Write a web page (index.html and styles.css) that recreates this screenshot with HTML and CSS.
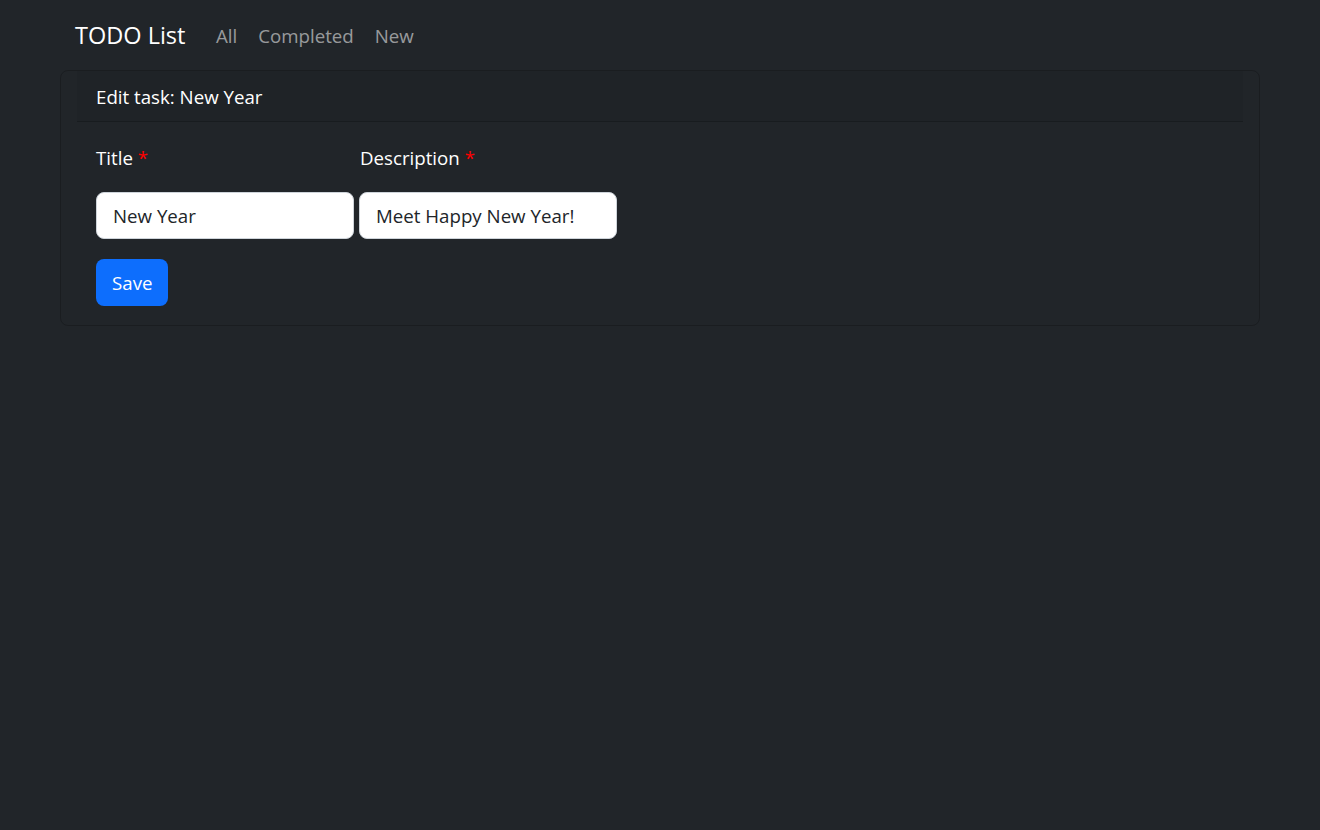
FILE: index.html
```html
<!DOCTYPE html>
<html lang="en">
<head>
<meta charset="utf-8">
<title>TODO List</title>
<link rel="stylesheet" href="styles.css">
</head>
<body>
<nav class="navbar">
  <a class="brand" href="#">TODO List</a>
  <ul class="nav-links">
    <li><a href="#">All</a></li>
    <li><a href="#">Completed</a></li>
    <li><a href="#">New</a></li>
  </ul>
</nav>
<main class="card">
  <div class="card-header">Edit task: New Year</div>
  <form class="card-body">
    <div class="fields">
      <label class="label">Title <span class="req">*</span></label>
      <label class="label label-desc">Description <span class="req">*</span></label>
      <input class="input" type="text" value="New Year">
      <input class="input" type="text" value="Meet Happy New Year!">
    </div>
    <button class="btn" type="button">Save</button>
  </form>
</main>
</body>
</html>
```

FILE: styles.css
```css
* { box-sizing: border-box; }
html, body { margin: 0; padding: 0; }
body {
  background: #212529;
  color: #dee2e6;
  font-family: "Open Sans", "Noto Sans", sans-serif;
  font-size: 18.7px;
  width: 1320px;
  height: 830px;
}
.navbar {
  height: 70px;
  display: flex;
  align-items: center;
  padding: 0 75px;
}
.brand {
  color: #fff;
  text-decoration: none;
  font-size: 23.5px;
  margin-right: 20px;
}
.nav-links {
  list-style: none;
  display: flex;
  margin: 0;
  padding: 0;
}
.nav-links a {
  display: block;
  padding: 0 10.5px;
  color: rgba(255, 255, 255, 0.55);
  text-decoration: none;
  font-size: 18.7px;
}
.card {
  margin: 0 60px;
  width: 1200px;
  border: 1px solid rgba(0, 0, 0, 0.2);
  border-radius: 8px;
  padding: 0 16px;
}
.card-header {
  height: 51px;
  display: flex;
  align-items: center;
  padding: 0 19px;
  color: #fff;
  background: rgba(0, 0, 0, 0.03);
  border-bottom: 1px solid rgba(0, 0, 0, 0.2);
}
.card-body {
  padding: 21px 19px 19px;
  margin: 0;
}
.fields {
  display: grid;
  grid-template-columns: 258px 258px;
  column-gap: 5px;
  row-gap: 19px;
}
.label {
  color: #fff;
  line-height: 30px;
}
.label-desc { padding-left: 1px; }
.req { color: #f00; }
.input {
  height: 47px;
  border: 1px solid #ced4da;
  border-radius: 8px;
  background: #fff;
  color: #212529;
  font-family: inherit;
  font-size: 18.7px;
  padding: 0 16px;
  margin: 0;
}
.btn {
  display: block;
  margin-top: 20px;
  height: 47px;
  padding: 0 16px;
  border: none;
  border-radius: 8px;
  background: #0d6efd;
  color: #fff;
  font-family: inherit;
  font-size: 18.7px;
}
```
